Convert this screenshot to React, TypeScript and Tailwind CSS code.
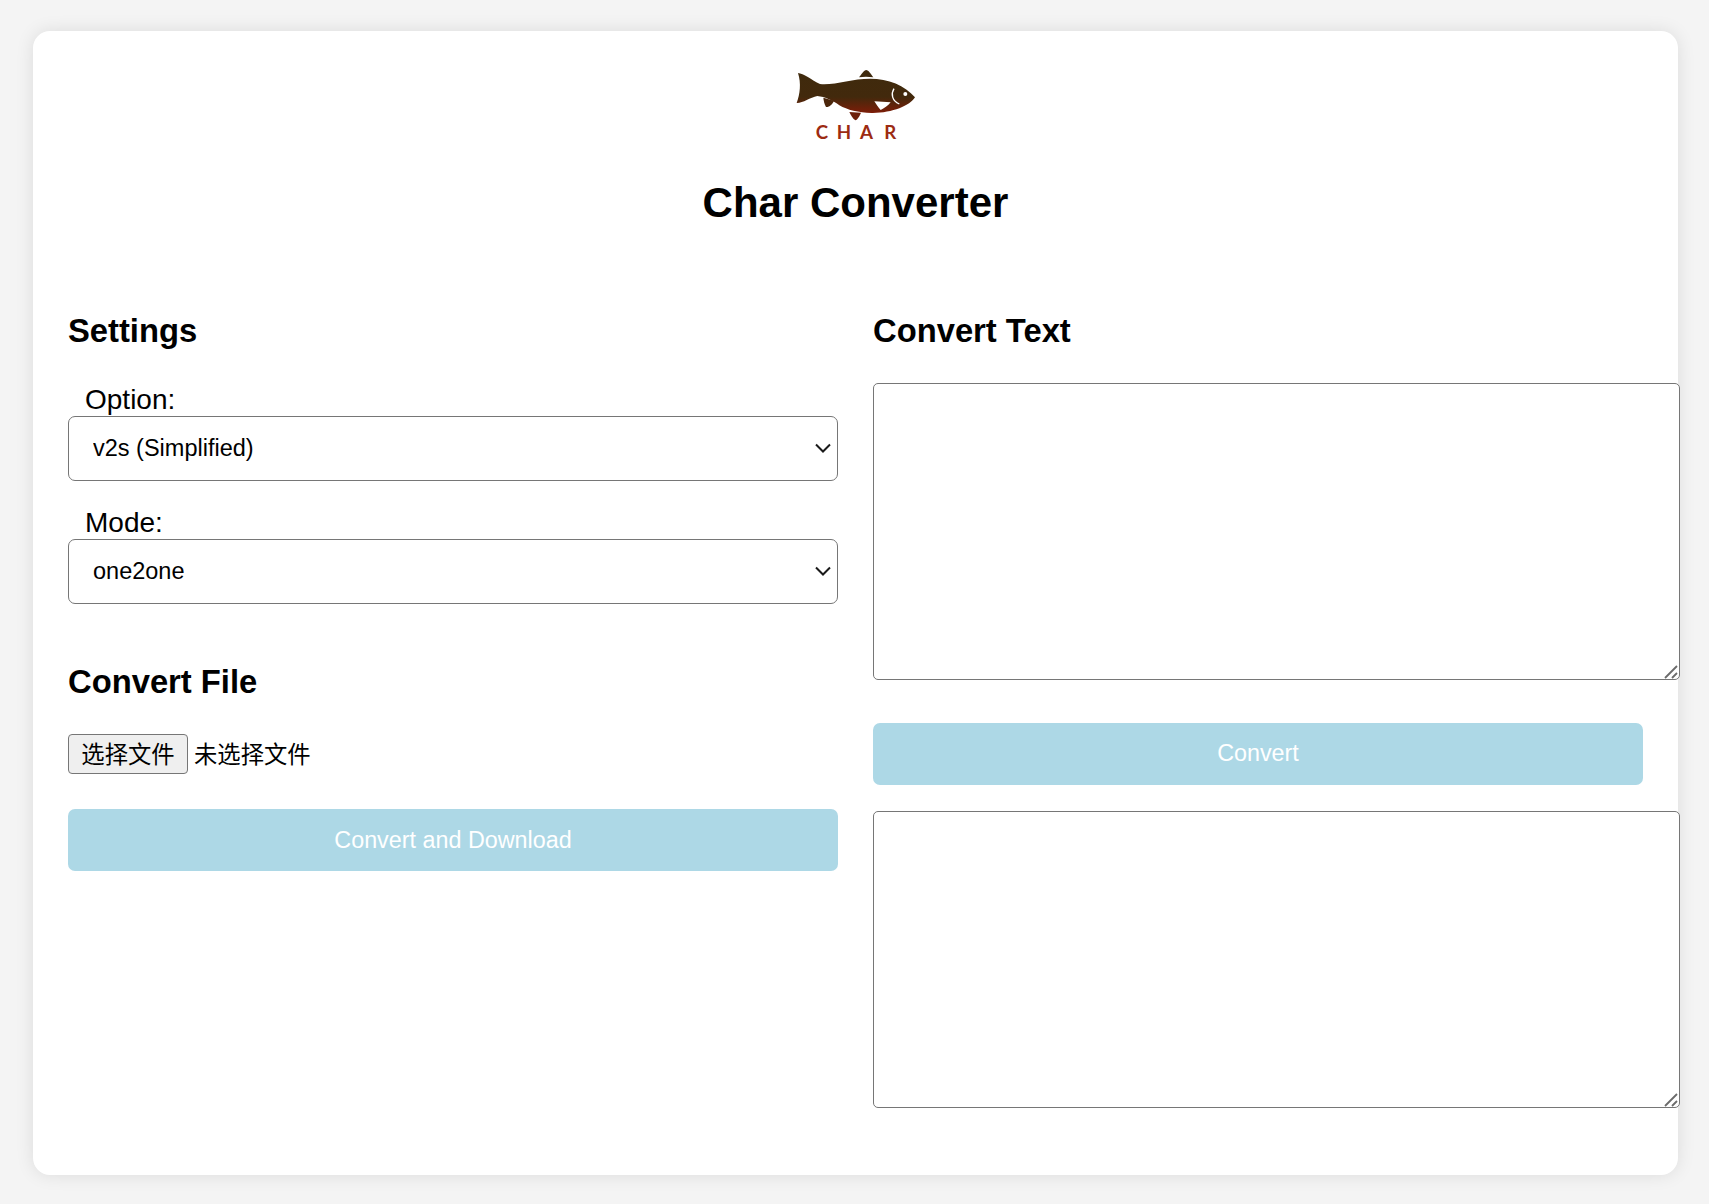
import React from 'react';

const sans = 'font-["Liberation_Sans","Noto_Sans_CJK_SC",sans-serif]';

function Logo() {
  return (
    <svg className="block mx-auto" width="122" height="76" viewBox="105 55 366 228">
      <defs>
        <linearGradient id="fishFill" x1="0" y1="0" x2="0" y2="1">
          <stop offset="0" stopColor="#3f2a0d" />
          <stop offset="0.6" stopColor="#42290c" />
          <stop offset="1" stopColor="#7d1d08" />
        </linearGradient>
      </defs>
      <path
        d="M114 67 C130 68 155 88 180 100 C225 104 275 84 330 84 C385 84 435 104 465 140 C450 165 395 188 335 187 C295 186 262 178 238 164 C220 150 195 138 172 136 C150 140 128 158 110 157 C120 130 124 98 114 67 Z"
        fill="url(#fishFill)"
      />
      <path d="M297 80 C304 72 310 60 318 58 C326 58 334 72 340 80 C325 78 310 78 297 80 Z" fill="#3f2a0d" />
      <path d="M190 141 L222 150 C218 160 208 170 198 169 C193 160 191 150 190 141 Z" fill="#4b260b" />
      <path d="M268 184 L303 186 C299 196 293 207 286 209 C278 204 272 192 268 184 Z" fill="#6d200a" />
      <path d="M343 152 L392 155 C384 165 372 174 362 178 C354 170 348 160 343 152 Z" fill="#fff" />
      <path d="M402 114 C392 130 396 150 418 160" fill="none" stroke="#fff" strokeWidth="4" />
      <circle cx="436" cy="130" r="6" fill="#fff" />
      <g fill="#9c2b12" fontFamily="Lato, sans-serif" fontWeight="700" fontSize="56">
        <text x="167" y="265">C</text>
        <text x="230" y="265">H</text>
        <text x="300" y="265">A</text>
        <text x="373" y="265">R</text>
      </g>
    </svg>
  );
}

function Field({ label, value, className }: { label: string; value: string; className: string }) {
  return (
    <div className={className}>
      <label className="block pl-[17px] text-[28px] leading-[33px] text-black">{label}</label>
      <div className="relative">
        <select
          defaultValue={value}
          className="block w-full h-[65px] pl-[24px] pr-[30px] appearance-none text-[23.5px] text-black bg-white border-[1.75px] border-[#767676] rounded-[7px]"
        >
          <option>{value}</option>
        </select>
        <svg className="absolute right-[7px] top-[27px]" width="16" height="11" viewBox="0 0 16 11">
          <path d="M1 1.5 L8 8.5 L15 1.5" fill="none" stroke="#1a1a1a" strokeWidth="2" />
        </svg>
      </div>
    </div>
  );
}

function TextBox({ className }: { className: string }) {
  return (
    <div className={`relative w-[807px] ${className}`}>
      <textarea className="block w-full h-[297px] resize-none bg-white border-[1.75px] border-[#767676] rounded-[5px]" />
      <svg className="absolute right-[2px] bottom-[1px]" width="14" height="14" viewBox="0 0 14 14">
        <path d="M1 13 L13 1 M8 13 L13 8" fill="none" stroke="#6b6b6b" strokeWidth="1.8" />
      </svg>
    </div>
  );
}

export default function App() {
  return (
    <div className={`${sans} min-h-[1204px] bg-[#f4f4f4] pt-[31px] pl-[33px]`}>
      <div className="w-[1645px] h-[1144px] bg-white rounded-[17px] shadow-[0_0_18px_rgba(0,0,0,0.1)] px-[35px] pt-[38px]">
        <Logo />
        <h1 className="mt-[34px] text-center text-[42px] leading-[48px] font-bold text-black">Char Converter</h1>
        <div className="mt-[85px] flex gap-[35px] items-start">
          <div className="w-[770px]">
            <h2 className="text-[32.76px] leading-[38px] font-bold text-black">Settings</h2>
            <Field label="Option:" value="v2s (Simplified)" className="mt-[33px]" />
            <Field label="Mode:" value="one2one" className="mt-[25px]" />
            <h2 className="mt-[59px] text-[32.76px] leading-[38px] font-bold text-black">Convert File</h2>
            <div className="mt-[33px] flex items-center gap-[6px] text-[23.33px] text-black">
              <button className="w-[120px] h-[40px] pt-[3px] bg-[#efefef] border-[1.75px] border-[#767676] rounded-[4px]">选择文件</button>
              <span className="pt-[3px]">未选择文件</span>
            </div>
            <button className="mt-[35px] block w-full h-[62px] bg-[#add8e6] text-white text-[23.33px] rounded-[7px]">Convert and Download</button>
          </div>
          <div className="w-[770px]">
            <h2 className="text-[32.76px] leading-[38px] font-bold text-black">Convert Text</h2>
            <TextBox className="mt-[33px]" />
            <button className="mt-[43px] block w-full h-[62px] pb-[2px] bg-[#add8e6] text-white text-[23.33px] rounded-[7px]">Convert</button>
            <TextBox className="mt-[26px]" />
          </div>
        </div>
      </div>
    </div>
  );
}
